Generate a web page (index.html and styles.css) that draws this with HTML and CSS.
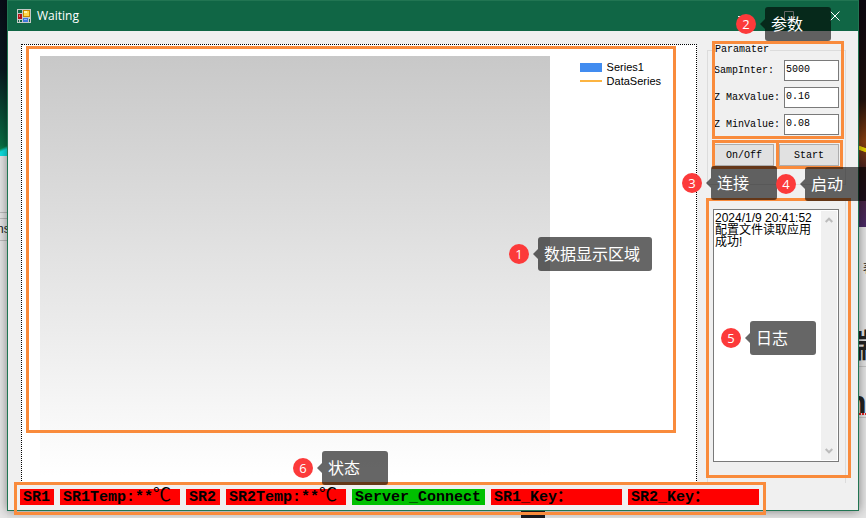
FILE: index.html
```html
<!DOCTYPE html>
<html lang="zh-CN">
<head>
<meta charset="utf-8">
<title>Waiting</title>
<link rel="stylesheet" href="styles.css">
</head>
<body>
<div class="desktop">
  <aside class="backdrop backdrop-left"><span class="back-word">ns</span></aside>
  <main class="window">
    <header class="titlebar">
      <svg class="app-icon" viewBox="0 0 14 14" aria-hidden="true">
        <path fill="#c4c9c6" d="M0 0h14v14H0z"/>
        <path fill="#106645" d="M1 1h4v3H1zM1 11h1v2H1zM3 11h2v2H3zM12 10h1v3h-1z"/>
        <path fill="#b01218" d="M1 5h4v5H1z"/>
        <path fill="#f06060" d="M2 6h1v2H2z"/>
        <path fill="#c88a00" d="M6 1h7v7H6z"/>
        <path fill="#ffd84a" d="M7 2h5v5H7z"/>
        <path fill="#fff3b0" d="M7 2h3v2H7z"/>
        <path fill="#3f76dc" d="M6 9h5v4H6z"/>
        <path fill="#8bb6fa" d="M7 10h3v1H7z"/>
      </svg>
      <h1 class="title">Waiting</h1>
      <div class="window-buttons">
        <button class="win-btn" type="button" aria-label="Minimize"><svg viewBox="0 0 10 10"><path d="M0 5.500h10"/></svg></button>
        <button class="win-btn win-max" type="button" aria-label="Maximize"><svg viewBox="0 0 10 10"><path d="M.5.5h9v9h-9z"/></svg></button>
        <button class="win-btn" type="button" aria-label="Close"><svg viewBox="0 0 10 10"><path d="M.5.5l9 9M9.500.5l-9 9"/></svg></button>
      </div>
      <div class="callout callout-params"><b class="num">2</b><span class="tip">参数</span></div>
    </header>

    <div class="content">
      <section class="chart">
        <div class="plot"></div>
        <ul class="legend">
          <li><i class="key key-bar"></i>Series1</li>
          <li><i class="key key-line"></i>DataSeries</li>
        </ul>
        <div class="frame frame-chart"></div>
        <div class="callout callout-chart"><b class="num">1</b><span class="tip">数据显示区域</span></div>
        <div class="callout callout-status"><b class="num">6</b><span class="tip">状态</span></div>
      </section>

      <div class="side">
        <div class="settings">
          <fieldset class="group params">
            <legend>Paramater</legend>
            <div class="field"><label for="samp">SampInter:</label><input id="samp" type="text" value="5000"></div>
            <div class="field"><label for="zmax">Z MaxValue:</label><input id="zmax" type="text" value="0.16"></div>
            <div class="field"><label for="zmin">Z MinValue:</label><input id="zmin" type="text" value="0.08"></div>
            <div class="actions">
              <button class="btn" type="button">On/Off</button>
              <button class="btn" type="button">Start</button>
            </div>
          </fieldset>
          <div class="frame frame-params"></div>
          <div class="frame frame-onoff"></div>
          <div class="frame frame-start"></div>
          <div class="callout callout-onoff"><b class="num">3</b><span class="tip">连接</span></div>
          <div class="callout callout-start"><b class="num">4</b><span class="tip">启动</span></div>
        </div>
        <section class="group log">
          <div class="log-box">
            <textarea class="log-text" aria-label="Log" readonly>2024/1/9 20:41:52
配置文件读取应用成功!</textarea>
            <div class="scrollbar" aria-hidden="true">
              <svg viewBox="0 0 8 6"><path d="M.7 5L4 1.700 7.300 5"/></svg>
              <svg viewBox="0 0 8 6"><path d="M.7 1L4 4.300 7.300 1"/></svg>
            </div>
          </div>
          <div class="frame frame-log"></div>
          <div class="callout callout-log"><b class="num">5</b><span class="tip">日志</span></div>
        </section>
      </div>
    </div>

    <footer class="status">
      <span class="tag">SR1</span>
      <span class="tag tag-temp">SR1Temp:**<span class="unit">℃</span></span>
      <span class="tag">SR2</span>
      <span class="tag tag-temp">SR2Temp:**<span class="unit">℃</span></span>
      <span class="tag tag-ok">Server_Connect</span>
      <span class="tag tag-key">SR1_Key：</span>
      <span class="tag tag-key">SR2_Key：</span>
      <div class="frame frame-status"></div>
    </footer>
  </main>
  <aside class="backdrop backdrop-right"><span class="back-small">著</span><span class="back-big">端</span><span class="back-n">n</span></aside>
  <div class="taskbar-item"></div>
</div>
</body>
</html>
```

FILE: styles.css
```css
* { box-sizing: border-box; }

body {
  margin: 0;
  font-family: "Liberation Mono", "Noto Sans CJK SC", monospace;
  font-size: 10px;
  color: #000;
}

.desktop {
  position: relative;
  display: grid;
  grid-template-columns: 7px 1fr 7px;
  height: 100vh;
  overflow: hidden;
  background: #e4e4e4;
}

.backdrop {
  overflow: hidden;
  color: #222;
}
.backdrop-left {
  padding-top: 221px;
  background:
    linear-gradient(#bbb, #bbb) 0 212px / 100% 1px no-repeat,
    linear-gradient(#bbb, #bbb) 0 218px / 100% 1px no-repeat,
    linear-gradient(#bbb, #bbb) 0 240px / 100% 1px no-repeat,
    linear-gradient(155deg, transparent 40%, #0de0e0 60%) 0 142px / 100% 14px no-repeat,
    linear-gradient(#080d18, #081a20 70px, #087044 145px, #10a050 156px, #e6e6e6 156px);
}
.back-word {
  display: block;
  margin-left: -3px;
  font: 12px/16px "Liberation Sans", sans-serif;
}
.backdrop-right {
  padding-top: 260px;
  background:
    linear-gradient(#c4c4c4, #c4c4c4) 0 366px / 100% 1px no-repeat,
    repeating-linear-gradient(90deg, #e02020 0 2px, transparent 2px 3px) 0 413px / 100% 2px no-repeat,
    linear-gradient(#c4c4c4, #c4c4c4) 0 417px / 100% 1px no-repeat,
    linear-gradient(20deg, transparent 35%, #e8d000 40%, #e8d000 60%, transparent 65%) 0 142px / 100% 14px no-repeat,
    linear-gradient(#0c0810, #20100c 100px, #8a4010 142px, #452020 170px, #4a2a66 227px, #e4e4e4 227px);
}
.back-small, .back-big, .back-n { display: block; }
.back-small {
  margin-left: 4px;
  font: 12px/16px "Noto Sans CJK SC", sans-serif;
}
.back-big, .back-n {
  font: bold 32px/40px "Liberation Sans", "Noto Sans CJK SC", sans-serif;
}
.back-big { margin: 50px 0 0 -14px; }
.back-n { margin: 16px 0 0 -12px; }

.taskbar-item {
  position: absolute;
  left: 521px;
  bottom: 0;
  width: 24px;
  height: 7px;
  background: #1c1a20;
}

.window {
  position: relative;
  z-index: 1;
  display: flex;
  flex-direction: column;
  margin-bottom: 7px;
  border: 1px solid #217552;
  background: #f0f0f0;
  box-shadow: 0 0 10px rgba(0, 0, 0, .45);
}

.titlebar {
  position: relative;
  z-index: 3;
  display: flex;
  align-items: center;
  height: 30px;
  padding-left: 9px;
  background: #106645;
  color: #fff;
}
.app-icon { width: 14px; height: 14px; }
.title {
  flex: 1;
  margin: 0 0 0 6px;
  font: 12px/18px "Open Sans", sans-serif;
}
.window-buttons { display: flex; }
.win-btn {
  width: 46px;
  height: 29px;
  padding: 0;
  border: 0;
  background: none;
}
.win-btn svg {
  width: 10px;
  height: 10px;
  fill: none;
  stroke: #fff;
}

.content {
  flex: 1;
  display: flex;
  gap: 10px;
  min-height: 0;
  margin-bottom: -2px;
  padding: 13px 12px 0 13px;
}

.chart {
  position: relative;
  flex: 1;
  display: flex;
  gap: 30px;
  padding: 11px 35px 0 18px;
  border: 1px dotted #000;
  border-bottom: 0;
  background: #fff;
}
.plot {
  flex: 1;
  background: linear-gradient(#c8c8c8, #fff 420px);
}
.legend {
  margin: 4px 0 0;
  padding: 0;
  list-style: none;
  font: 11px/14px "Liberation Sans", sans-serif;
}
.legend li {
  display: flex;
  align-items: center;
  gap: 5px;
}
.key { width: 22px; }
.key-bar { height: 9px; background: #418cf0; }
.key-line { height: 2px; background: #fcb441; }

.side {
  display: flex;
  flex-direction: column;
  width: 139px;
}
.group {
  min-width: 0;
  margin: 0;
  border: 1px solid #dcdcdc;
}
.settings { position: relative; }
.params {
  height: 141px;
  padding: 4px 6px 0 6px;
}
.params legend {
  padding: 0 1px;
  line-height: 12px;
}
.field {
  display: flex;
  align-items: center;
  justify-content: space-between;
  margin-bottom: 6px;
}
.field label { white-space: nowrap; }
.field input {
  width: 55px;
  height: 21px;
  padding: 0 1px 2px;
  border: 1px solid #7a7a7a;
  background: #fff;
  font: inherit;
}
.actions {
  display: grid;
  grid-template-columns: 1fr 1fr;
  gap: 5px;
  margin-top: 9px;
}
.btn {
  height: 22px;
  padding: 0;
  border: 1px solid #adadad;
  background: #e1e1e1;
  font: inherit;
}

.log {
  position: relative;
  flex: 1;
  display: flex;
  margin-top: 14px;
  padding: 9px 6px 22px 5px;
}
.log-box {
  flex: 1;
  display: flex;
  min-width: 0;
  padding: 1px;
  border: 1px solid #7a7a7a;
  background: #fff;
}
.log-text {
  flex: 1;
  min-width: 0;
  padding: 1px 0 0;
  border: 0;
  resize: none;
  overflow: hidden;
  background: none;
  font: 12px/12px "Liberation Sans", "Noto Sans CJK SC", sans-serif;
}
.scrollbar {
  display: flex;
  flex-direction: column;
  align-items: center;
  justify-content: space-between;
  width: 16px;
  padding: 6px 0;
  background: #f0f0f0;
}
.scrollbar svg {
  width: 8px;
  height: 6px;
  fill: none;
  stroke: #bcbcbc;
  stroke-width: 2;
}

.status {
  position: relative;
  display: flex;
  align-items: flex-start;
  gap: 6px;
  margin-left: 6px;
  padding: 6px 0 5px 6px;
  background: #f0f0f0;
  font-weight: bold;
  font-size: 15px;
  line-height: 18px;
}
.tag {
  width: 34px;
  height: 16px;
  padding: 0 3px;
  background: #f00;
  white-space: nowrap;
}
.tag-temp { width: 120px; }
.tag-ok { width: 133px; background: #00c000; }
.tag-key { width: 131px; }
.unit {
  font: 18px/0 "Noto Sans CJK SC", sans-serif;
}

.frame {
  position: absolute;
  z-index: 2;
  border: 3px solid #f98b3c;
  pointer-events: none;
}
.frame-chart { inset: 1px 20px 52px 4px; }
.frame-params { inset: -3px 2px 46px 5px; }
.frame-onoff { left: 5px; width: 67px; bottom: 16px; height: 29px; }
.frame-start { right: 3px; width: 67px; bottom: 16px; height: 29px; }
.frame-log { inset: -2px -6px 6px -2px; }
.frame-status { left: 0; width: 752px; top: -1px; bottom: -5px; }

.callout {
  position: absolute;
  z-index: 4;
  display: flex;
  align-items: center;
  gap: 9px;
  color: #fff;
}
.num {
  width: 20px;
  height: 20px;
  border-radius: 50%;
  background: #fc3a3a;
  font: 13px/20px "Open Sans", sans-serif;
  text-align: center;
}
.tip {
  position: relative;
  min-width: 66px;
  height: 34px;
  padding: 0 6px;
  border-radius: 3px;
  background: rgba(0, 0, 0, .6);
  font: 16px/33px "Noto Sans CJK SC", sans-serif;
  white-space: nowrap;
}
.tip::before {
  content: "";
  position: absolute;
  right: 100%;
  top: 12px;
  border: 5px solid transparent;
  border-left: 0;
  border-right-color: rgba(0, 0, 0, .6);
}
.callout-params { right: 27px; top: 6px; }
.callout-chart { right: 44px; top: 192px; }
.callout-chart .tip { min-width: 114px; }
.callout-status { left: 271px; bottom: 0; }
.callout-onoff { left: -25px; bottom: -15px; }
.callout-start { left: 69px; bottom: -16px; }
.callout-log { right: 29px; bottom: 129px; }
```
